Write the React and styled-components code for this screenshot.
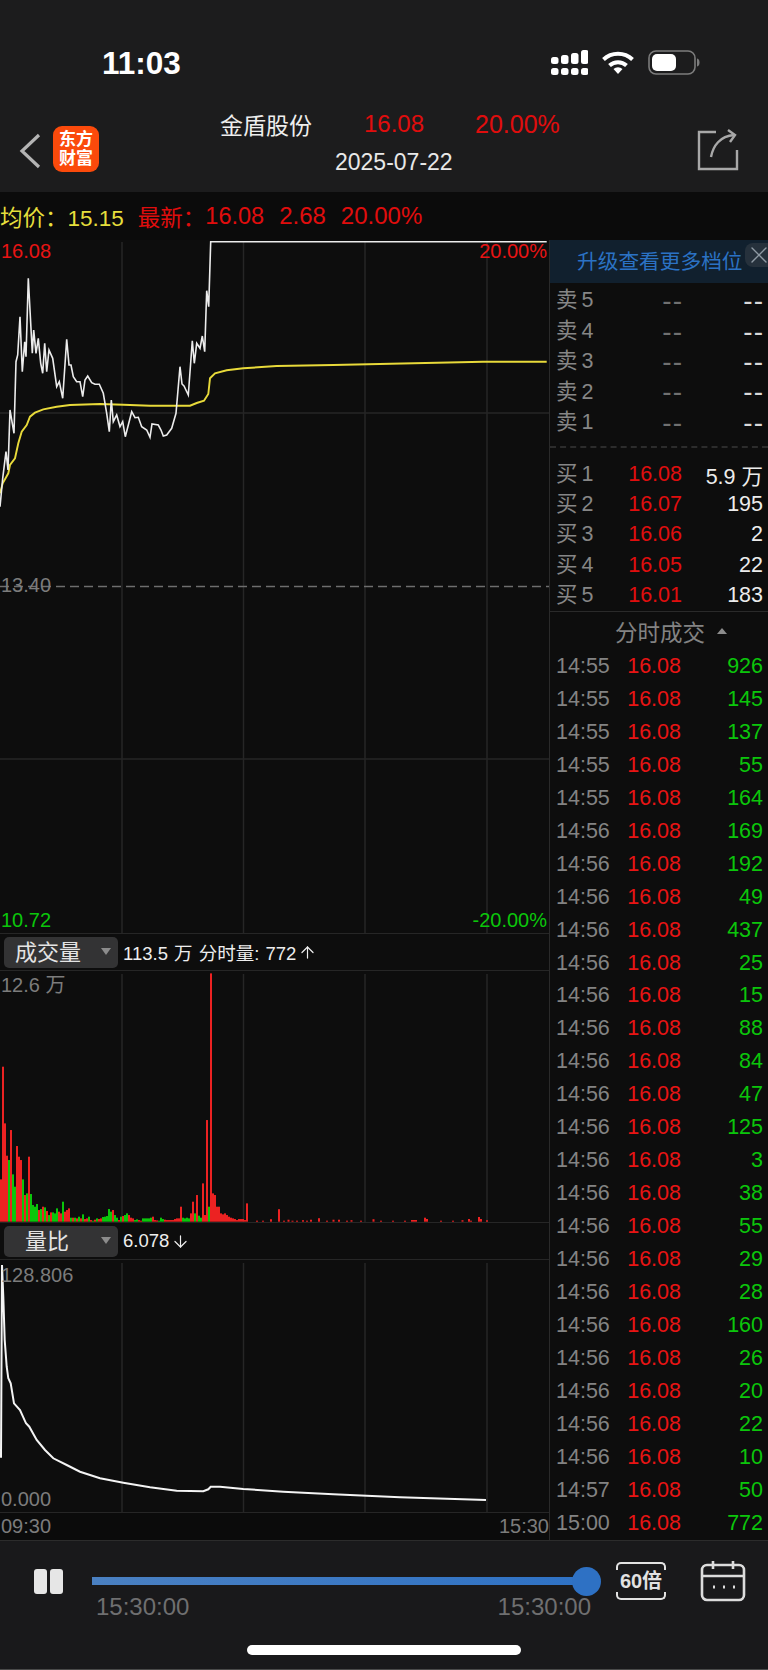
import styled, { createGlobalStyle } from 'styled-components'
import { X, ArrowUp, ArrowDown } from 'lucide-react'

const GlobalStyle = createGlobalStyle`
  html, body {
    margin: 0;
    padding: 0;
    background: #0d0d0d;
  }
  * {
    box-sizing: border-box;
  }
`

const FONT = `"Liberation Sans", "Noto Sans CJK SC", sans-serif`
const RED = '#e81414'
const GREEN = '#0bc60b'
const GRID = '#262626'

const Page = styled.div`
  width: 768px;
  height: 1670px;
  display: flex;
  flex-direction: column;
  overflow: hidden;
  font-family: ${FONT};
  background: #0d0d0d;
  color: #fff;
`

const Header = styled.header`
  height: 192px;
  background: #1c1c1d;
  display: flex;
  flex-direction: column;
`

const StatusBar = styled.div`
  height: 100px;
  display: flex;
  align-items: flex-start;
  justify-content: space-between;
  padding: 46px 68px 0 102px;
`

const Clock = styled.div`
  font-size: 31.5px;
  line-height: 34px;
  font-weight: 700;
`

const StatusIcons = styled.div`
  display: flex;
  align-items: flex-start;
  margin-top: 4px;
  gap: 13px;
`

const NavBar = styled.div`
  height: 92px;
  display: grid;
  grid-template-columns: 220px 1fr 71px;
`

const NavLeft = styled.div`
  display: flex;
  align-items: flex-start;
  padding: 26px 0 0 19px;
  gap: 11px;
`

const Logo = styled.div`
  width: 46px;
  height: 46px;
  background: #fb4a0b;
  border-radius: 9px;
  color: #fff;
  font-size: 17px;
  line-height: 19px;
  font-weight: 700;
  text-align: center;
  padding-top: 4px;
`

const NavCenter = styled.div`
  display: flex;
  flex-direction: column;
`

const TitleRow = styled.div`
  display: flex;
  align-items: center;
  height: 34px;
  margin-top: 7px;
`

const StockName = styled.span`
  font-size: 23px;
  width: 144px;
  color: #eee;
`

const TitleNum = styled.span`
  font-size: ${(p) => p.$size}px;
  color: #e00d0d;
  width: ${(p) => p.$width}px;
`

const DateText = styled.div`
  font-size: 23px;
  line-height: 28px;
  margin: 7px 0 0 115px;
  color: #e8e8e8;
`

const NavRight = styled.div`
  padding-top: 29px;
`

const QuoteBar = styled.div`
  height: 48px;
  background: #0b0b0b;
  display: flex;
  align-items: center;
  font-size: 22.5px;
`

const QuoteItem = styled.span`
  color: ${(p) => p.$color || '#e00d0d'};
  font-size: ${(p) => p.$size || 22.5}px;
  margin-left: ${(p) => p.$gap || 0}px;
`

const Body = styled.div`
  height: 1300px;
  display: flex;
`

const LeftCol = styled.div`
  width: 549px;
  display: flex;
  flex-direction: column;
`

const ChartPanel = styled.div`
  position: relative;
  height: ${(p) => p.$height}px;
  background: #0d0d0d;
  svg {
    display: block;
  }
`

const ChartLabel = styled.span`
  position: absolute;
  top: ${(p) => p.$top}px;
  ${(p) => (p.$right ? 'right: 2px;' : 'left: 1px;')}
  font-size: 20px;
  line-height: 24px;
  color: ${(p) => p.$color};
`

const IndicatorBar = styled.div`
  height: 38px;
  display: flex;
  align-items: center;
  padding-left: 4px;
  background: #0d0d0d;
  border-top: 1px solid ${GRID};
  border-bottom: 1px solid ${GRID};
  font-size: 18.5px;
  word-spacing: 1px;
  color: #eee;
  svg {
    flex: none;
    margin-left: 2px;
  }
`

const IndicatorSelect = styled.div`
  position: relative;
  width: 114px;
  height: 31px;
  border-radius: 5px;
  background: #333334;
  font-size: 22px;
  line-height: 31px;
  padding-left: ${(p) => p.$pad}px;
  color: #e4e4e4;
  margin-right: 5px;
  &::after {
    content: '';
    position: absolute;
    right: 7px;
    top: 11px;
    border-left: 5px solid transparent;
    border-right: 5px solid transparent;
    border-top: 7px solid #8c8c8c;
  }
`

const AxisBar = styled.div`
  height: 28px;
  display: flex;
  justify-content: space-between;
  align-items: center;
  background: #0b0b0b;
  border-top: 1px solid ${GRID};
  padding: 0 0 0 1px;
  font-size: 20px;
  color: #7c7c7c;
`

const RightCol = styled.div`
  width: 219px;
  border-left: 1px solid #2a2a2a;
  display: flex;
  flex-direction: column;
  font-size: 21.5px;
`

const Banner = styled.div`
  position: relative;
  height: 43px;
  background: #11202e;
  color: #2b72c4;
  font-size: 20.7px;
  line-height: 43px;
  padding-left: 27px;
  white-space: nowrap;
`

const BannerClose = styled.div`
  position: absolute;
  right: 0;
  top: 3px;
  width: 23px;
  height: 24px;
  border-radius: 8px 0 0 8px;
  background: #26313c;
  color: #8f9aa4;
  display: flex;
  align-items: center;
  justify-content: center;
  padding-left: 5px;
  svg {
    flex: none;
  }
`

const OrderBlock = styled.div`
  padding: ${(p) => p.$pad};
  border-bottom: ${(p) => (p.$dashed ? `2px dashed #2c2c2c` : '1px solid #2a2a2a')};
`

const OrderRow = styled.div`
  height: 30.4px;
  display: grid;
  grid-template-columns: 62px 64px 81px;
  align-items: center;
  padding-left: 6px;
  white-space: nowrap;
`

const OrderLabel = styled.span`
  color: #868686;
  font-size: 21.5px;
  line-height: 1;
  word-spacing: -2px;
`

const OrderNum = styled.span`
  text-align: right;
  color: ${(p) => p.$color};
`

const EmptyNum = styled.span`
  text-align: right;
  color: ${(p) => p.$color};
  font-size: 28px;
  line-height: 24px;
  letter-spacing: 1px;
  margin-right: -1px;
`

const TradeHeader = styled.div`
  height: 38px;
  display: flex;
  align-items: center;
  padding-left: 65px;
  color: #838383;
  font-size: 22.5px;
  &::after {
    content: '';
    margin-left: 12px;
    border-left: 5.5px solid transparent;
    border-right: 5.5px solid transparent;
    border-bottom: 6px solid #8c8c8c;
  }
`

const TradeRow = styled.div`
  height: 33.05px;
  display: grid;
  grid-template-columns: 60px 65px 82px;
  align-items: center;
  padding-left: 6px;
`

const TradeTime = styled.span`
  color: #838383;
`

const TradeNum = styled.span`
  text-align: right;
  color: ${(p) => p.$color};
`

const Player = styled.footer`
  height: 130px;
  background: #19191b;
  border-top: 1px solid #2c2c2c;
  border-bottom: 1px solid #4a4a4a;
  display: flex;
  flex-direction: column;
`

const PlayerRow = styled.div`
  height: 103px;
  display: flex;
  align-items: flex-start;
`

const PauseButton = styled.div`
  width: 92px;
  display: flex;
  gap: 3px;
  padding: 28px 0 0 34px;
  &::before,
  &::after {
    content: '';
    width: 13px;
    height: 25px;
    border-radius: 3px;
    background: #e6e6e6;
  }
`

const SliderCol = styled.div`
  width: 524px;
  padding-top: 36px;
`

const SliderTrack = styled.div`
  position: relative;
  width: 482px;
  height: 8px;
  background: linear-gradient(90deg, #4a80c2, #2f72c5);
  &::after {
    content: '';
    position: absolute;
    right: -27px;
    top: -10.5px;
    width: 29px;
    height: 29px;
    border-radius: 50%;
    background: #2e71c4;
  }
`

const SliderTimes = styled.div`
  width: 499px;
  display: flex;
  justify-content: space-between;
  padding-left: 4px;
  margin-top: 8px;
  font-size: 24px;
  line-height: 28px;
  color: #6f6f70;
`

const SpeedBadge = styled.div`
  position: relative;
  width: 50px;
  height: 38px;
  margin: 21px 0 0 0;
  font-size: 20px;
  line-height: 38px;
  font-weight: 700;
  text-align: center;
  color: #e2e2e2;
  white-space: nowrap;
  &::before,
  &::after {
    content: '';
    position: absolute;
    left: 0;
    right: 0;
    height: 6px;
    border: 2.5px solid #e2e2e2;
  }
  &::before {
    top: 0;
    border-bottom: 0;
    border-radius: 5px 5px 0 0;
  }
  &::after {
    bottom: 0;
    border-top: 0;
    border-radius: 0 0 5px 5px;
  }
`

const CalendarSlot = styled.div`
  margin: 19px 0 0 34px;
`

const HomeIndicator = styled.div`
  width: 274px;
  height: 10px;
  border-radius: 5px;
  background: #fff;
  margin: 1px auto 0;
`

// traced from the chart, in crop coords: x/3, y/3 + 230
const priceLine = [
  [0, 830], [8, 745], [18, 665], [24, 720], [30, 540], [42, 610], [48, 395], [53, 375], [60, 260], [67, 425],
  [74, 335], [78, 380], [85, 145], [90, 240], [97, 370], [101, 300], [108, 370], [115, 325], [122, 400], [128, 430],
  [134, 340], [140, 425], [147, 360], [158, 385], [170, 470], [178, 455], [188, 505], [200, 328], [207, 405], [213, 405],
  [220, 440], [230, 455], [240, 455], [248, 500], [255, 450], [263, 438], [275, 458], [285, 463], [298, 463], [310, 490],
  [320, 550], [328, 605], [334, 510], [340, 575], [350, 555], [360, 590], [368, 575], [376, 620], [395, 545], [405, 563],
  [415, 562], [425, 590], [440, 600], [450, 622], [456, 582], [475, 585], [483, 600], [490, 618], [500, 615], [515, 595],
  [528, 550], [540, 410], [546, 462], [552, 468], [565, 495], [577, 332], [583, 400], [590, 340], [600, 355], [607, 318],
  [614, 365], [620, 182], [626, 230], [632, 35], [1640, 35],
]

const avgLine = [
  [0, 790], [8, 760], [25, 730], [30, 705], [45, 685], [55, 640], [65, 605], [80, 585], [90, 560], [105, 548],
  [130, 538], [170, 530], [210, 525], [300, 522], [370, 524], [450, 527], [570, 527], [590, 519], [612, 512], [625, 492],
  [630, 445], [645, 430], [680, 421], [730, 415], [830, 408], [1000, 405], [1449, 395], [1640, 395],
]

const ratioLine = [
  [0, 680], [3, 680], [6, 105], [10, 200], [14, 330], [20, 410], [25, 445], [32, 460], [42, 520], [60, 540],
  [78, 580], [88, 590], [110, 630], [135, 660], [160, 685], [200, 705], [240, 725], [300, 745], [370, 758], [450, 772],
  [530, 782], [610, 784], [625, 778], [632, 770], [660, 770], [730, 777], [850, 785], [1000, 793], [1200, 802], [1458, 810],
]

const toPoints = (line) => line.map(([x, y]) => `${(x / 3).toFixed(1)},${(y / 3 + 230).toFixed(1)}`).join(' ')
const ratioPoints = (line) => line.map(([x, y]) => `${(x / 3).toFixed(1)},${(y / 3 + 1230).toFixed(1)}`).join(' ')

// one token per bar, 2px apart: colour + height in crop px (3x)
const earlyBars = `r127 r465 r295 r198 g185 r275 g142 g105 r227 r195 r185 g127 r80 g85 r195 g83 g50 g45 g53 r35 g38 r45 g43 r32
  g20 r28 g28 g25 g40 r30 r25 g60 r30 r35 r40 g12 r12 g12 r10 g15 r10 g22 r8 r10 g15 r5 g3 r6 g10 r8 r10 g14 g15 g17 g38 g30 r35 g20
  g12 r5 g15 r17 g20 g25 r20 r12 r10 g5 g7 r5 r3 g10 g10 g10 g10 g12 r15 r5 r4 g3 g12 g8 r6 r5 r5 r5 r5 r8 r10 r10 r45 g12 g10 g12 g10
  r25 r60 g25 r80 g18 g12 r115 r20 r305 g45 r745 r85 r80 r45 r45 r25 r22 r25 r20 r15 r12 r10 r8 r5 r8 r8 r8 r5 r55`
  .split(/\s+/)
  .map((t, i) => ({ x: i * 2, h: Number(t.slice(1)) / 3, color: t[0] === 'r' ? '#ec2222' : '#0bc60b' }))

// sparse late bars: x and height in screen px
const lateBars = [
  [270, 2.5], [278, 12.5], [283, 1], [287.5, 2], [291.5, 1], [302, 1.5], [310, 2], [318, 3.5], [332.5, 2], [338, 2],
  [350.5, 1.5], [372.5, 2.5], [411, 1.7], [413, 1.7], [415, 1.7], [424, 4], [426, 2.7], [461.5, 1.5], [468, 2.7], [478, 4.7], [480, 2.7],
  [486, 1.4], [256, 1], [262, 1], [296, 1], [306, 1], [326, 1], [346, 1], [360, 1], [380, 1], [392, 1], [404, 1], [440, 1], [452, 1], [470, 1],
].map(([x, h]) => ({ x, h, color: '#ec2222' }))

const GridLines = ({ top, bottom }) => (
  <>
    {[122, 243.5, 365, 487].map((x) => (
      <line key={x} x1={x} x2={x} y1={top} y2={bottom} stroke={GRID} strokeWidth="1.5" />
    ))}
  </>
)

const sellRows = ['卖 5', '卖 4', '卖 3', '卖 2', '卖 1']
const buyRows = [
  ['买 1', '16.08', '5.9 万'],
  ['买 2', '16.07', '195'],
  ['买 3', '16.06', '2'],
  ['买 4', '16.05', '22'],
  ['买 5', '16.01', '183'],
]

const trades = [
  ['14:55', 926], ['14:55', 145], ['14:55', 137], ['14:55', 55], ['14:55', 164], ['14:56', 169], ['14:56', 192],
  ['14:56', 49], ['14:56', 437], ['14:56', 25], ['14:56', 15], ['14:56', 88], ['14:56', 84], ['14:56', 47],
  ['14:56', 125], ['14:56', 3], ['14:56', 38], ['14:56', 55], ['14:56', 29], ['14:56', 28], ['14:56', 160],
  ['14:56', 26], ['14:56', 20], ['14:56', 22], ['14:56', 10], ['14:57', 50], ['15:00', 772],
]

const SignalIcon = () => (
  <svg width="37" height="25" viewBox="0 0 37 25" fill="#fff">
    {[7, 5, 3, 0].map((y, i) => (
      <g key={i}>
        <rect x={i * 10} y={y} width="7.5" height={14 - y} rx="2.5" />
        <rect x={i * 10} y="18" width="7.5" height="7" rx="2.5" />
      </g>
    ))}
  </svg>
)

const WifiIcon = () => (
  <svg width="34" height="24" viewBox="0 0 34 24" fill="none" stroke="#fff" strokeWidth="4">
    <path d="M2.5 9.5A21 21 0 0 1 31.5 9.5" />
    <path d="M8.5 15.5A12.5 12.5 0 0 1 25.5 15.5" />
    <path d="M12.5 19a6.5 6.5 0 0 1 9 0L17 24Z" fill="#fff" stroke="none" />
  </svg>
)

const BatteryIcon = () => (
  <svg width="52" height="25" viewBox="0 0 52 25">
    <rect x="1" y="1" width="46" height="23" rx="7" fill="none" stroke="#7c7c7c" strokeWidth="1.6" />
    <rect x="4" y="4" width="24" height="17" rx="5" fill="#fff" />
    <path d="M49 8.5c2 .5 2.5 2 2.5 4s-.5 3.5-2.5 4Z" fill="#7c7c7c" />
  </svg>
)

const BackIcon = () => (
  <svg width="23" height="36" viewBox="0 0 23 36" fill="none" stroke="#b4b4b4" strokeWidth="3.2" style={{ marginTop: 7 }}>
    <path d="M20 2 3 18l17 16" />
  </svg>
)

const ShareIcon = () => (
  <svg width="42" height="42" viewBox="0 0 42 42" fill="none" stroke="#a8a8a8" strokeWidth="2.4">
    <path d="M19 3H2v37h38V21" />
    <path d="M14 28C16 17 23 7 37 6" />
    <path d="M31 1l7 5-5 7" />
  </svg>
)

const CalendarIcon = () => (
  <svg width="46" height="42" viewBox="0 0 46 42" fill="none" stroke="#dcdcdc" strokeWidth="2.6">
    <rect x="2" y="5" width="42" height="35" rx="5" />
    <path d="M2 16h42M13 1v8M33 1v8" />
    <path d="M13 27h2M23 27h2M33 27h2" strokeWidth="3" />
  </svg>
)

function App() {
  return (
    <Page>
      <GlobalStyle />
      <Header>
        <StatusBar>
          <Clock>11:03</Clock>
          <StatusIcons>
            <SignalIcon />
            <WifiIcon />
            <BatteryIcon />
          </StatusIcons>
        </StatusBar>
        <NavBar>
          <NavLeft>
            <BackIcon />
            <Logo>
              东方
              <br />
              财富
            </Logo>
          </NavLeft>
          <NavCenter>
            <TitleRow>
              <StockName>金盾股份</StockName>
              <TitleNum $width={111} $size={24}>16.08</TitleNum>
              <TitleNum $width={90} $size={25}>20.00%</TitleNum>
            </TitleRow>
            <DateText>2025-07-22</DateText>
          </NavCenter>
          <NavRight>
            <ShareIcon />
          </NavRight>
        </NavBar>
      </Header>

      <QuoteBar>
        <QuoteItem $color="#e6df3c">均价：15.15</QuoteItem>
        <QuoteItem $gap={14}>最新：</QuoteItem>
        <QuoteItem $size={23.5}>16.08</QuoteItem>
        <QuoteItem $gap={15} $size={24}>2.68</QuoteItem>
        <QuoteItem $gap={15} $size={24}>20.00%</QuoteItem>
      </QuoteBar>

      <Body>
        <LeftCol>
          <ChartPanel $height={693}>
            <svg width="549" height="693" viewBox="0 240 549 693">
              <GridLines top={242} bottom={933} />
              <line x1="0" x2="549" y1="413" y2="413" stroke={GRID} strokeWidth="1.5" />
              <line x1="0" x2="549" y1="759" y2="759" stroke={GRID} strokeWidth="1.5" />
              <line x1="0" x2="549" y1="586.5" y2="586.5" stroke="#6e6e6e" strokeWidth="1.5" strokeDasharray="9 5" />
              <polyline points={toPoints(avgLine)} fill="none" stroke="#e8da3a" strokeWidth="1.9" />
              <polyline points={toPoints(priceLine)} fill="none" stroke="#ececec" strokeWidth="1.6" />
            </svg>
            <ChartLabel $top={-1} $color={RED}>16.08</ChartLabel>
            <ChartLabel $top={-1} $right $color={RED}>20.00%</ChartLabel>
            <ChartLabel $top={333} $color="#7c7c7c">13.40</ChartLabel>
            <ChartLabel $top={668} $color={GREEN}>10.72</ChartLabel>
            <ChartLabel $top={668} $right $color={GREEN}>-20.00%</ChartLabel>
          </ChartPanel>

          <IndicatorBar>
            <IndicatorSelect $pad={11}>成交量</IndicatorSelect>
            113.5 万 分时量: 772
            <ArrowUp size={19} strokeWidth={1.5} />
          </IndicatorBar>
          <ChartPanel $height={251}>
            <svg width="549" height="251" viewBox="0 971 549 251">
              <GridLines top={974} bottom={1222} />
              {[...earlyBars, ...lateBars].map((b, i) => (
                <rect key={i} x={b.x} y={1221.7 - b.h} width="2" height={b.h} fill={b.color} />
              ))}
            </svg>
            <ChartLabel $top={2} $color="#7c7c7c">12.6 万</ChartLabel>
          </ChartPanel>

          <IndicatorBar>
            <IndicatorSelect $pad={21}>量比</IndicatorSelect>
            6.078
            <ArrowDown size={19} strokeWidth={1.5} />
          </IndicatorBar>
          <ChartPanel $height={252}>
            <svg width="549" height="252" viewBox="0 1260 549 252">
              <GridLines top={1263} bottom={1512} />
              <polyline points={ratioPoints(ratioLine)} fill="none" stroke="#f4f4f4" strokeWidth="2" />
            </svg>
            <ChartLabel $top={3} $color="#7c7c7c">128.806</ChartLabel>
            <ChartLabel $top={227} $color="#7c7c7c">0.000</ChartLabel>
          </ChartPanel>

          <AxisBar>
            <span>09:30</span>
            <span>15:30</span>
          </AxisBar>
        </LeftCol>

        <RightCol>
          <Banner>
            升级查看更多档位
            <BannerClose>
              <X size={28} strokeWidth={1.2} />
            </BannerClose>
          </Banner>
          <OrderBlock $pad="3px 0 8px" $dashed>
            {sellRows.map((label) => (
              <OrderRow key={label}>
                <OrderLabel>{label}</OrderLabel>
                <EmptyNum $color="#707070">--</EmptyNum>
                <EmptyNum $color="#d8d8d8">--</EmptyNum>
              </OrderRow>
            ))}
          </OrderBlock>
          <OrderBlock $pad="11px 0 0">
            {buyRows.map(([label, price, vol]) => (
              <OrderRow key={label}>
                <OrderLabel>{label}</OrderLabel>
                <OrderNum $color="#e00d0d">{price}</OrderNum>
                <OrderNum $color="#ececec">{vol}</OrderNum>
              </OrderRow>
            ))}
          </OrderBlock>
          <TradeHeader>分时成交</TradeHeader>
          {trades.map(([time, vol], i) => (
            <TradeRow key={i}>
              <TradeTime>{time}</TradeTime>
              <TradeNum $color={RED}>16.08</TradeNum>
              <TradeNum $color={GREEN}>{vol}</TradeNum>
            </TradeRow>
          ))}
        </RightCol>
      </Body>

      <Player>
        <PlayerRow>
          <PauseButton />
          <SliderCol>
            <SliderTrack />
            <SliderTimes>
              <span>15:30:00</span>
              <span>15:30:00</span>
            </SliderTimes>
          </SliderCol>
          <SpeedBadge>60倍</SpeedBadge>
          <CalendarSlot>
            <CalendarIcon />
          </CalendarSlot>
        </PlayerRow>
        <HomeIndicator />
      </Player>
    </Page>
  )
}

export default App
